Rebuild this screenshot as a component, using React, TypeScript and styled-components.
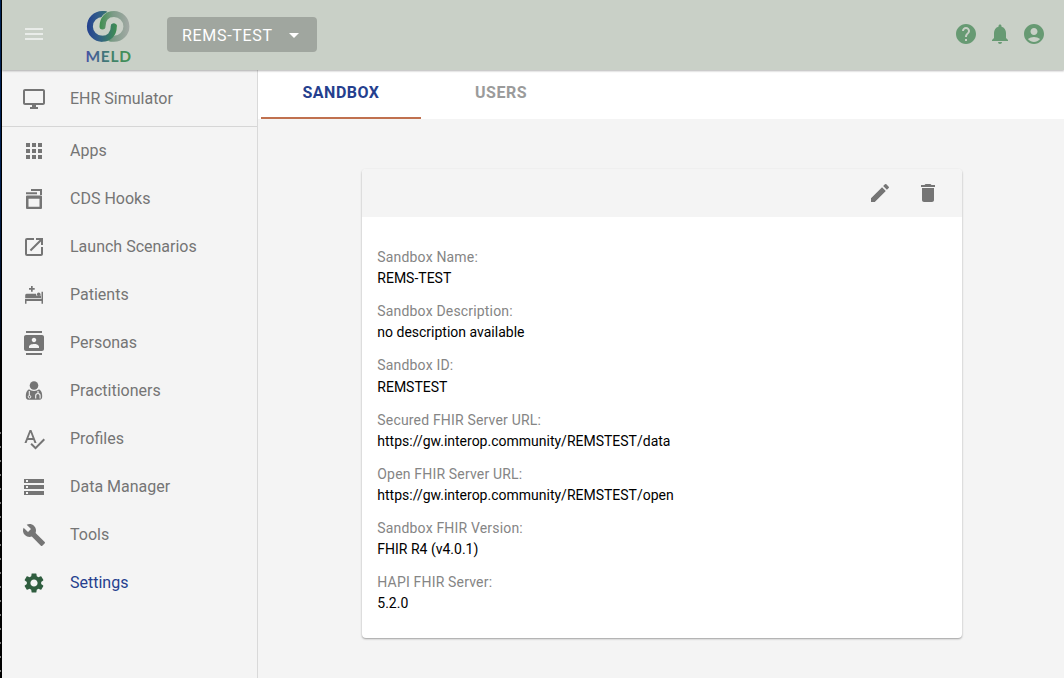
import React from "react";
import styled, { createGlobalStyle } from "styled-components";
import {
  MdMenu, MdArrowDropDown, MdHelp, MdNotifications, MdAccountCircle, MdOutlineDesktopWindows, MdApps,
  MdLaunch, MdContacts, MdSpellcheck, MdStorage, MdBuild, MdSettings, MdEdit, MdDelete,
} from "react-icons/md";

const GlobalStyle = createGlobalStyle`
  *, *::before, *::after { box-sizing: border-box; }
  body { margin: 0; background: #f4f4f4; font-family: Roboto, "Liberation Sans", sans-serif; overflow: hidden; }
`;

const Shell = styled.div`
  display: flex;
  height: 678px;
  width: 1064px;
`;

const WindowEdge = styled.div`
  flex: none;
  width: 2px;
  background:
    linear-gradient(90deg, transparent 50%, #000 50%),
    repeating-linear-gradient(transparent 0, transparent 12px, #777 12px, #777 14px) 0 420px / 2px 258px no-repeat,
    linear-gradient(#00245a 0, #001f50 180px, #000a1c 340px, #000 360px);
`;

const Page = styled.div`
  flex: 1;
  display: flex;
  flex-direction: column;
`;

const Header = styled.header`
  flex: none;
  display: flex;
  align-items: center;
  height: 70px;
  padding: 0 18px 0 20px;
  background: #c9d0c7;
  box-shadow: 0 1px 2px rgba(0, 0, 0, 0.3);
  z-index: 1;
`;

const MenuIcon = styled(MdMenu)`
  color: #e9ece9;
  font-size: 24px;
  margin-bottom: 2px;
`;

const Logo = styled.svg`
  width: 60px;
  height: 64px;
  margin: 2px 0 0 34px;
`;

const SandboxSelect = styled.button`
  display: flex;
  align-items: center;
  justify-content: space-between;
  width: 150px;
  height: 35px;
  margin: 0 auto 1px 27px;
  padding: 2px 11px 0 15px;
  border: 0;
  border-radius: 4px;
  background: #a0a69f;
  color: #fff;
  font: 400 16px/20px Roboto, sans-serif;
  letter-spacing: 0.68px;
  svg { font-size: 24px; margin-bottom: 2px; }
`;

const HeaderActions = styled.div`
  display: flex;
  gap: 10px;
  margin-bottom: 2px;
  color: #679a73;
  font-size: 24px;
`;

const Body = styled.div`
  flex: 1;
  display: flex;
  min-height: 0;
`;

const Sidebar = styled.nav`
  flex: none;
  width: 256px;
  border-right: 1px solid #d9d9d9;
  background: #f4f4f4;
`;

const NavItem = styled.a<{ $active?: boolean; $first?: boolean }>`
  display: flex;
  align-items: center;
  height: ${(p) => (p.$first ? "57px" : "48px")};
  padding: 0 0 ${(p) => (p.$first ? "0" : "2px")} 20px;
  border-bottom: ${(p) => (p.$first ? "1px solid #d6d6d6" : "0")};
  color: ${(p) => (p.$active ? "#253f8e" : "#757575")};
  font-size: 16px;
  svg {
    width: 24px;
    height: 24px;
    margin: 1px 24px 0 0;
    color: ${(p) => (p.$active ? "#2f5d3f" : "#757575")};
  }
`;

const Main = styled.main`
  flex: 1;
  display: flex;
  flex-direction: column;
  align-items: center;
`;

const Tabs = styled.div`
  display: flex;
  width: 100%;
  height: 49px;
  padding-left: 3px;
  margin-bottom: 50px;
  background: #fff;
`;

const Tab = styled.div<{ $active?: boolean }>`
  width: 160px;
  height: 49px;
  padding-top: 13px;
  text-align: center;
  border-bottom: 2px solid ${(p) => (p.$active ? "#c0714f" : "transparent")};
  color: ${(p) => (p.$active ? "#253f8e" : "#9b9b9b")};
  font-size: 16px;
  line-height: 20px;
  font-weight: 700;
  letter-spacing: 0.5px;
`;

const Card = styled.section`
  width: 600px;
  height: 469px;
  margin-left: 2px;
  border-radius: 4px;
  background: #fff;
  overflow: hidden;
  box-shadow: 0 1px 2px rgba(0, 0, 0, 0.36);
`;

const CardBar = styled.div`
  display: flex;
  justify-content: flex-end;
  align-items: center;
  gap: 24px;
  height: 48px;
  padding-right: 22px;
  background: #f4f4f4;
  color: #757575;
  font-size: 24px;
`;

const Details = styled.dl`
  margin: 0;
  padding: 30px 15px 30px 15.3px;
`;

const Field = styled.div`
  height: 54.2px;
  font-size: 14px;
  line-height: 21.5px;
  dt { color: #858585; letter-spacing: 0.18px; }
  dd { margin: -0.3px 0 0; color: #000; }
`;

const HooksIcon = () => (
  <svg viewBox="0 0 24 24" fill="currentColor">
    <path d="M9 2h11v6h-2V4H9zM4 5.200h11v2H4z" />
    <path fillRule="evenodd" d="M5 8.500h14a1 1 0 0 1 1 1V21a1 1 0 0 1-1 1H5a1 1 0 0 1-1-1V9.500a1 1 0 0 1 1-1zm1.500 3.200v8h11v-8z" />
  </svg>
);

const PatientIcon = () => (
  <svg viewBox="0 0 24 24" fill="currentColor">
    <path d="M9 3h1.700v2h2v1.700h-2v2H9v-2H7V5h2zM3 16h16.500V8.700H21v12.100h-1.500v-2.900h-15v2.900H3z" />
    <path d="M4.500 10.800H14v1.800h5V15.300H3.200v-2.900A1.600 1.600 0 0 1 4.500 10.800z" />
    <circle cx="16.700" cy="11.200" r="1.800" />
  </svg>
);

const PractitionerIcon = () => (
  <svg viewBox="0 0 24 24" fill="currentColor">
    <circle cx="12" cy="6.500" r="4.300" />
    <path d="M7 10.300C4.500 12 3.800 14 3.800 17c0 2.500.7 3.800 2.700 3.800h11c2 0 2.700-1.300 2.700-3.800 0-3-.7-5-3.200-6.700-2.500 2.200-7.500 2.200-10 0z" />
    <path d="M7.300 12v4.500M16 12v2.500m-2.300 5v-2.800q0-2.200 2.200-2.200t2.200 2.200v2.800" fill="none" stroke="#f4f4f4" strokeWidth="1.100" />
    <circle cx="7.500" cy="17.800" r="1.300" fill="none" stroke="#f4f4f4" />
  </svg>
);

const MeldLogo = () => (
  <Logo viewBox="80 4 60 64" fill="none">
    <defs>
      <linearGradient id="left" gradientUnits="userSpaceOnUse" x1="87" y1="0" x2="117" y2="0">
        <stop stopColor="#23418f" /><stop offset=".35" stopColor="#315b8b" /><stop offset="1" stopColor="#3f8f50" />
      </linearGradient>
      <linearGradient id="right" gradientUnits="userSpaceOnUse" x1="100" y1="0" x2="129" y2="0">
        <stop stopColor="#3f8f50" /><stop offset=".45" stopColor="#7d9b88" /><stop offset="1" stopColor="#a3aaa5" />
      </linearGradient>
      <linearGradient id="word" gradientUnits="userSpaceOnUse" x1="86" y1="0" x2="130" y2="0">
        <stop stopColor="#4653a4" /><stop offset=".55" stopColor="#40806d" /><stop offset="1" stopColor="#439253" />
      </linearGradient>
    </defs>
    <path d="M105 14H102.300A12.400 12.400 0 0 0 102.300 38.800C109 38.800 113.800 34 113.800 26.500" stroke="url(#left)" strokeWidth="6" strokeLinecap="round" />
    <path d="M102.500 27C102.500 19 107 14 114 14A12.400 12.400 0 0 1 114 38.800H111" stroke="#c9d0c7" strokeWidth="7.200" />
    <path d="M102.300 38.800C109 38.800 113.800 34 113.800 26.500" stroke="#c9d0c7" strokeWidth="7.200" />
    <path d="M102.500 26.500C102.500 19 107 14 114 14A12.400 12.400 0 0 1 114 38.800H111" stroke="url(#right)" strokeWidth="6" strokeLinecap="round" />
    <path d="M102.300 38.800C109 38.800 113.800 34 113.800 26.500" stroke="url(#left)" strokeWidth="6" strokeLinecap="round" />
    <text x="85.500" y="62.400" textLength="45.500" fill="url(#word)" fontFamily="Lato" fontSize="15.500" fontWeight="700">MELD</text>
  </Logo>
);

const navItems = [
  { label: "EHR Simulator", Icon: MdOutlineDesktopWindows },
  { label: "Apps", Icon: MdApps },
  { label: "CDS Hooks", Icon: HooksIcon },
  { label: "Launch Scenarios", Icon: MdLaunch },
  { label: "Patients", Icon: PatientIcon },
  { label: "Personas", Icon: MdContacts },
  { label: "Practitioners", Icon: PractitionerIcon },
  { label: "Profiles", Icon: MdSpellcheck },
  { label: "Data Manager", Icon: MdStorage },
  { label: "Tools", Icon: MdBuild },
  { label: "Settings", Icon: MdSettings },
];

const fields = [
  ["Sandbox Name:", "REMS-TEST"],
  ["Sandbox Description:", "no description available"],
  ["Sandbox ID:", "REMSTEST"],
  ["Secured FHIR Server URL:", "https://gw.interop.community/REMSTEST/data"],
  ["Open FHIR Server URL:", "https://gw.interop.community/REMSTEST/open"],
  ["Sandbox FHIR Version:", "FHIR R4 (v4.0.1)"],
  ["HAPI FHIR Server:", "5.2.0"],
];

export default function App() {
  return (
    <Shell>
      <GlobalStyle />
      <WindowEdge />
      <Page>
        <Header>
          <MenuIcon />
          <MeldLogo />
          <SandboxSelect>REMS-TEST<MdArrowDropDown /></SandboxSelect>
          <HeaderActions><MdHelp /><MdNotifications /><MdAccountCircle /></HeaderActions>
        </Header>
        <Body>
          <Sidebar>
            {navItems.map(({ label, Icon }, i) => (
              <NavItem key={label} $first={i === 0} $active={label === "Settings"}><Icon />{label}</NavItem>
            ))}
          </Sidebar>
          <Main>
            <Tabs><Tab $active>SANDBOX</Tab><Tab>USERS</Tab></Tabs>
            <Card>
              <CardBar><MdEdit /><MdDelete /></CardBar>
              <Details>
                {fields.map(([name, value]) => (
                  <Field key={name}><dt>{name}</dt><dd>{value}</dd></Field>
                ))}
              </Details>
            </Card>
          </Main>
        </Body>
      </Page>
    </Shell>
  );
}
